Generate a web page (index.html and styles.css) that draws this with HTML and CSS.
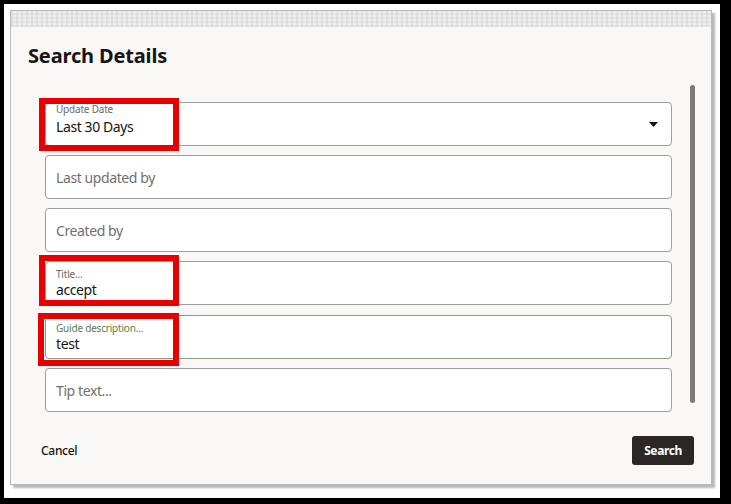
FILE: index.html
```html
<!DOCTYPE html>
<html lang="en">
<head>
<meta charset="utf-8">
<title>Search Details</title>
<link rel="stylesheet" href="styles.css">
</head>
<body>
<div class="frame">
  <div class="dialog">
    <div class="grip-band"></div>
    <h1 class="dialog-title">Search Details</h1>
    <div class="dialog-body">
      <div class="fields">
        <div class="field field-select">
          <span class="field-label">Update Date</span>
          <span class="field-value">Last 30 Days</span>
          <svg class="caret" width="9" height="5" viewBox="0 0 9 5"><path d="M0 0h9L4.5 5z" fill="#161513"/></svg>
          <div class="annot annot-date"></div>
        </div>
        <div class="field field-empty">
          <span class="placeholder">Last updated by</span>
        </div>
        <div class="field field-empty">
          <span class="placeholder">Created by</span>
        </div>
        <div class="field field-inset">
          <span class="field-label">Title...</span>
          <span class="field-value">accept</span>
          <div class="annot annot-title"></div>
        </div>
        <div class="field field-inset field-focus">
          <span class="field-label">Guide description...</span>
          <span class="field-value">test</span>
          <div class="annot annot-guide"></div>
        </div>
        <div class="field field-empty field-last">
          <span class="placeholder">Tip text...</span>
        </div>
      </div>
      <div class="scrollbar"></div>
    </div>
    <div class="dialog-footer">
      <button class="btn-cancel">Cancel</button>
      <button class="btn-search">Search</button>
    </div>
  </div>
</div>
</body>
</html>
```

FILE: styles.css
```css
html, body {
  margin: 0;
  padding: 0;
}
body {
  background: #000;
  width: 731px;
  height: 504px;
  padding: 4px 11px 6px 4px;
  box-sizing: border-box;
  font-family: "Noto Sans", "Open Sans", sans-serif;
  overflow: hidden;
}
.frame {
  background: #fff;
  width: 716px;
  height: 494px;
  padding: 6px 0 0 6px;
  box-sizing: border-box;
}
.dialog {
  width: 702px;
  height: 475px;
  box-sizing: border-box;
  border: 1px solid #b9b9b9;
  background: #f9f8f6;
  box-shadow: 3px 3px 2px rgba(0, 0, 0, 0.28);
  display: flex;
  flex-direction: column;
}
.grip-band {
  height: 16px;
  background:
    repeating-linear-gradient(90deg, rgba(200,200,200,0.35) 0 2px, rgba(255,255,255,0) 2px 5px),
    repeating-linear-gradient(0deg, rgba(210,210,210,0.35) 0 2px, rgba(255,255,255,0) 2px 4px),
    #eeeeee;
}
.dialog-title {
  margin: 17px 0 0 17px;
  font-size: 20px;
  line-height: 24px;
  font-weight: 700;
  color: #161513;
  letter-spacing: -0.15px;
}
.dialog-body {
  display: flex;
  margin-top: 17px;
}
.fields {
  width: 627px;
  margin-left: 34px;
  padding-top: 17px;
  display: flex;
  flex-direction: column;
  gap: 9px;
}
.field {
  position: relative;
  height: 44px;
  box-sizing: border-box;
  border: 1px solid #9e9e9e;
  border-radius: 4px;
  background: #fff;
  padding-left: 10px;
  display: flex;
  flex-direction: column;
}
.field-label {
  font-size: 10px;
  line-height: 12px;
  color: #6a6a6a;
  letter-spacing: -0.2px;
}
.field-value {
  font-size: 14px;
  line-height: 18px;
  color: #161513;
  letter-spacing: -0.4px;
}
.field-select .field-value {
  margin-top: 3px;
}
.field-inset {
  padding-top: 6px;
}
.field-inset .field-value {
  margin-top: 1px;
}
.field-focus {
  border-color: #8aa07c;
  margin-top: 1px;
}
.field-focus .field-label {
  color: #5f7a50;
}
.field-empty {
  justify-content: center;
}
.placeholder {
  font-size: 14px;
  line-height: 18px;
  color: #6f6f6f;
  padding-top: 1px;
  letter-spacing: -0.4px;
}
.caret {
  position: absolute;
  right: 13px;
  top: 19px;
}
.annot {
  position: absolute;
  box-sizing: border-box;
  border: 6px solid #e60000;
  width: 140px;
  left: -7px;
  pointer-events: none;
}
.annot-date {
  top: -5px;
  height: 53px;
}
.annot-title {
  top: -7px;
  height: 51px;
}
.annot-guide {
  top: -3px;
  height: 53px;
  left: -8px;
  width: 141px;
}
.scrollbar {
  width: 5px;
  height: 318px;
  margin-left: 18px;
  background: #7a7a7a;
  border-radius: 3px;
}
.dialog-footer {
  display: flex;
  justify-content: space-between;
  align-items: center;
  margin-top: 24px;
  padding: 0 17px 0 30px;
}
.btn-cancel {
  border: none;
  background: none;
  padding: 0;
  font-family: inherit;
  font-size: 12px;
  font-weight: 500;
  color: #161513;
  letter-spacing: -0.3px;
}
.btn-search {
  width: 62px;
  height: 29px;
  border: none;
  border-radius: 3px;
  background: #2b2725;
  color: #fff;
  font-family: inherit;
  font-size: 12px;
  font-weight: 700;
  letter-spacing: -0.4px;
  padding: 0;
}
```
